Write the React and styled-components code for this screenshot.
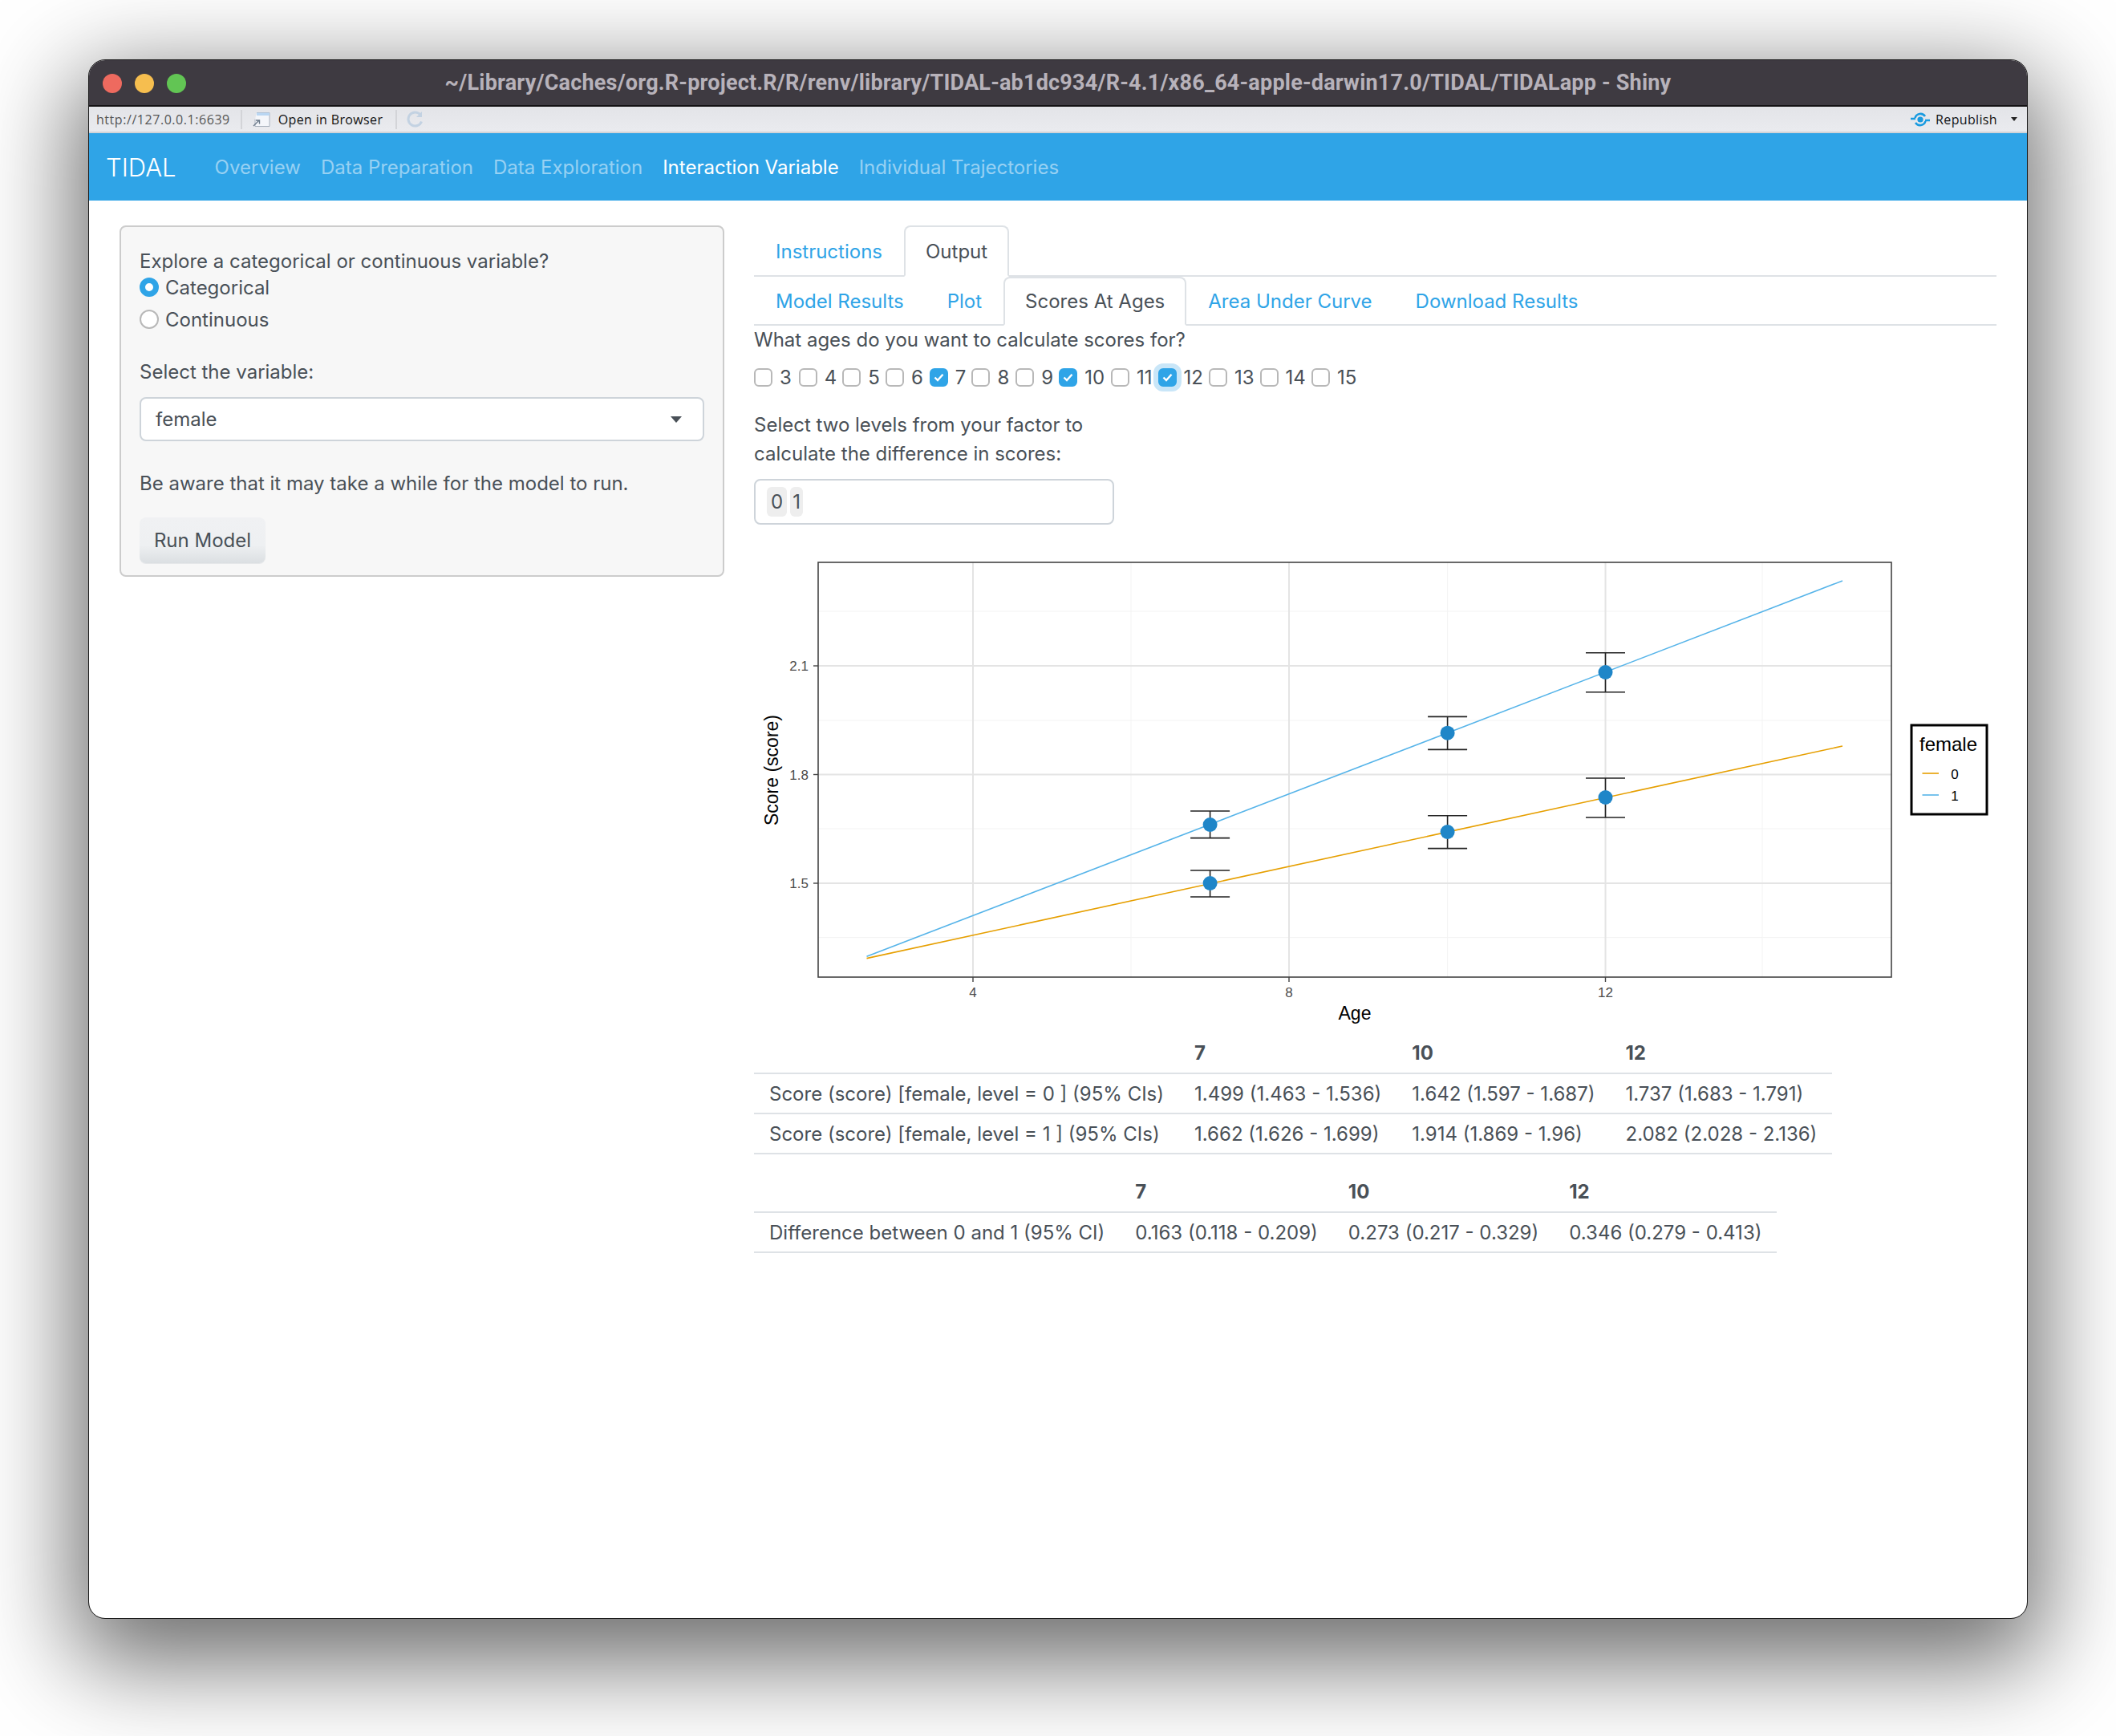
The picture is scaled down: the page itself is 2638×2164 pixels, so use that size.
import React from "react";
import styled, { createGlobalStyle } from "styled-components";

const Global = createGlobalStyle`
  html, body { margin: 0; padding: 0; background: #fff; }
  body { font-family: Inter, "Noto Sans", "Liberation Sans", sans-serif; color: #495057; }
  * { box-sizing: border-box; }
`;

const Page = styled.div`
  width: 2638px;
  height: 2164px;
  padding: 75px 0 0 111px;
  overflow: hidden;
`;
const Win = styled.div`
  width: 2416px;
  height: 1942px;
  border-radius: 20px;
  background: #fff;
  outline: 1px solid #1a1a1a;
  box-shadow: 0 38px 120px 18px rgba(0, 0, 0, 0.58);
  display: flex;
  flex-direction: column;
  overflow: hidden;
`;
const TitleBar = styled.div`
  height: 58px;
  flex: none;
  background: #3e3a41;
  border-bottom: 2px solid #141214;
  position: relative;
  display: flex;
  align-items: center;
  justify-content: center;
`;
const Lights = styled.div`
  position: absolute;
  left: 17px;
  top: 17px;
  display: flex;
  gap: 16px;
`;
const Light = styled.span`
  width: 24px;
  height: 24px;
  border-radius: 50%;
  background: ${(p) => p.$c};
`;
const TitleText = styled.div`
  font-family: Roboto, "Liberation Sans", sans-serif;
  font-weight: 700;
  font-size: 27px;
  color: #b7b2ba;
  letter-spacing: 0.2px;
  white-space: nowrap;
`;
const ToolBar = styled.div`
  height: 33px;
  flex: none;
  background: linear-gradient(#e3e4e8, #eaebef);
  border-bottom: 2px solid #d2d4d8;
  display: flex;
  align-items: center;
  padding: 0 12px 0 9px;
  font-family: "Open Sans", "DejaVu Sans", sans-serif;
  font-size: 16px;
  color: #111;
`;
const UrlText = styled.span`
  color: #555;
  font-size: 16px;
  letter-spacing: 0.55px;
  white-space: nowrap;
`;
const ToolSep = styled.span`
  width: 2px;
  height: 24px;
  background: #d3d4d8;
  margin: 0 ${(p) => p.$r}px 0 ${(p) => p.$l}px;
`;
const ToolLabel = styled.span`
  white-space: nowrap;
  letter-spacing: 0.35px;
`;
const Spacer = styled.div`
  flex: 1;
`;
const Caret = styled.span`
  width: 0;
  height: 0;
  border-left: 4px solid transparent;
  border-right: 4px solid transparent;
  border-top: 5px solid #222;
`;
const NavBar = styled.nav`
  height: 84px;
  flex: none;
  background: #2fa4e7;
  display: flex;
  align-items: center;
  padding: 0 0 0 21px;
`;
const Brand = styled.div`
  font-size: 31px;
  font-weight: 300;
  color: #fff;
  margin-right: 48px;
`;
const NavLink = styled.div`
  font-size: 24px;
  font-weight: 400;
  color: ${(p) => (p.$on ? "#fff" : "rgba(255,255,255,.5)")};
  margin-right: 25px;
  white-space: nowrap;
`;
const Main = styled.div`
  flex: 1;
  display: flex;
  gap: 37px;
  padding: 31px 38px 0 38px;
  align-items: flex-start;
`;
const Well = styled.aside`
  width: 754px;
  height: 438px;
  flex: none;
  background: #f7f7f7;
  border: 2px solid #ccc;
  border-radius: 8px;
  padding: 25px 23px 0 23px;
  font-size: 24px;
`;
const Line = styled.div`
  line-height: 36px;
  white-space: nowrap;
`;
const RadioRow = styled.div`
  display: flex;
  align-items: center;
  gap: 8px;
  height: ${(p) => p.$h}px;
  white-space: nowrap;
`;
const Radio = styled.span`
  width: 24px;
  height: 24px;
  border-radius: 50%;
  background: #fff;
  border: ${(p) => (p.$on ? "7px solid #2fa4e7" : "2px solid #b8b8b8")};
`;
const FieldLabel = styled(Line)`
  margin-top: ${(p) => p.$t}px;
`;
const SelectBox = styled.div`
  height: 55px;
  margin-top: 13px;
  background: #fff;
  border: 2px solid #ced4da;
  border-radius: 8px;
  display: flex;
  align-items: center;
  justify-content: space-between;
  padding: 0 26px 0 18px;
`;
const SelectCaret = styled.span`
  width: 0;
  height: 0;
  border-left: 7px solid transparent;
  border-right: 7px solid transparent;
  border-top: 8px solid #495057;
`;
const RunButton = styled.div`
  width: 157px;
  height: 57px;
  margin-top: 24px;
  border-radius: 8px;
  background: linear-gradient(#f0f1f3 0%, #eef0f2 60%, #dbdfe2 100%);
  box-shadow: 0 1px 0 #e6e8ea;
  display: flex;
  align-items: center;
  justify-content: center;
`;
const Content = styled.div`
  flex: 1;
  min-width: 0;
  font-size: 24px;
`;
const Tabs = styled.div`
  height: ${(p) => p.$h}px;
  display: flex;
  align-items: stretch;
  border-bottom: 2px solid #dee2e6;
`;
const Tab = styled.div`
  padding: 0 ${(p) => p.$px || 25}px;
  margin-bottom: -2px;
  display: flex;
  align-items: center;
  white-space: nowrap;
  color: ${(p) => (p.$on ? "#495057" : "#2fa4e7")};
  background: ${(p) => (p.$on ? "#fff" : "transparent")};
  border: 2px solid ${(p) => (p.$on ? "#dee2e6" : "transparent")};
  border-bottom-color: ${(p) => (p.$on ? "#fff" : "transparent")};
  border-radius: 8px 8px 0 0;
`;
const Checks = styled.div`
  display: flex;
  align-items: center;
  height: 36px;
  margin-top: 10px;
`;
const CheckItem = styled.div`
  display: flex;
  align-items: center;
  gap: 9px;
  margin-right: ${(p) => p.$mr}px;
`;
const Box = styled.span`
  width: 23px;
  height: 23px;
  border-radius: 6px;
  flex: none;
  display: flex;
  align-items: center;
  justify-content: center;
  background: ${(p) => (p.$on ? "#2fa4e7" : "#fff")};
  border: 2px solid ${(p) => (p.$on ? "#2fa4e7" : "#b8b8b8")};
  box-shadow: ${(p) => (p.$focus ? "0 0 0 6px #c9e6f8" : "none")};
`;
const Levels = styled.div`
  margin-top: 24px;
`;
const Selectize = styled.div`
  width: 449px;
  height: 57px;
  margin-top: 13px;
  border: 2px solid #ced4da;
  border-radius: 8px;
  display: flex;
  align-items: center;
  gap: 4px;
  padding: 0 0 0 14px;
`;
const Chip = styled.span`
  height: 37px;
  padding: 0 ${(p) => p.$px}px;
  border-radius: 6px;
  background: #eeeeee;
  display: flex;
  align-items: center;
`;
const PlotSvg = styled.svg`
  display: block;
  width: 1548px;
  height: 590px;
  margin-top: 37px;
`;
const Table = styled.table`
  border-collapse: collapse;
  margin-top: ${(p) => p.$t}px;
  font-size: 24px;
  & th {
    height: 50px;
    text-align: left;
    font-weight: 700;
    padding: 0 19px;
    white-space: nowrap;
    border-bottom: 2px solid #dee2e6;
  }
  & td {
    height: 50px;
    padding: 0 19px;
    white-space: nowrap;
    border-bottom: 2px solid #dee2e6;
  }
`;

const Check = () => (
  <svg width="13" height="11" viewBox="0 0 13 11">
    <path d="M1.5 5.5 L5 9 L11.5 1.8" fill="none" stroke="#fff" strokeWidth="2.4" />
  </svg>
);

const ages = [
  ["3", 0, 0, 9], ["4", 0, 0, 7], ["5", 0, 0, 7], ["6", 0, 0, 8], ["7", 1, 0, 7],
  ["8", 0, 0, 8], ["9", 0, 0, 7], ["10", 1, 0, 8], ["11", 0, 0, 7], ["12", 1, 1, 7],
  ["13", 0, 0, 7], ["14", 0, 0, 7], ["15", 0, 0, 0],
];

const xMajor = [1213, 1607, 2001.5];
const xMinor = [1410, 1804.6, 2197];
const yMajor = [[829, "2.1"], [964.5, "1.8"], [1100, "1.5"]];
const yMinor = [761, 897, 1032, 1167.6];
const points = [
  [1508.6, 1027, 1010, 1043.6], [1508.6, 1100, 1084, 1117],
  [1804.6, 912.7, 892.4, 933.4], [1804.6, 1036, 1015.7, 1056.6],
  [2001.5, 837, 812.8, 861.8], [2001.5, 993, 969, 1018],
];

const PlotText = styled.text`
  font-family: "Liberation Sans", Arial, sans-serif;
  font-size: ${(p) => p.$s}px;
  fill: ${(p) => p.$c};
`;

const Plot = () => (
  <PlotSvg viewBox="940 690 1548 590">
    {yMinor.map((y) => <line key={y} x1="1020" x2="2358" y1={y} y2={y} stroke="#f3f3f3" strokeWidth="1" />)}
    {xMinor.map((x) => <line key={x} x1={x} x2={x} y1="700" y2="1217" stroke="#f3f3f3" strokeWidth="1" />)}
    {yMajor.map(([y]) => <line key={y} x1="1020" x2="2358" y1={y} y2={y} stroke="#e4e4e4" strokeWidth="2" />)}
    {xMajor.map((x) => <line key={x} x1={x} x2={x} y1="700" y2="1217" stroke="#e4e4e4" strokeWidth="2" />)}
    <line x1="1080.5" y1="1191.3" x2="2297" y2="723" stroke="#56B4E9" strokeWidth="1.6" />
    <line x1="1080.5" y1="1193.6" x2="2297" y2="929" stroke="#E69F00" strokeWidth="1.6" />
    {points.map(([x, y, t, b]) => (
      <g key={x + "-" + y}>
        <path d={`M${x - 24.5} ${t}H${x + 24.5}M${x - 24.5} ${b}H${x + 24.5}M${x} ${t}V${b}`} stroke="#222" strokeWidth="1.6" fill="none" />
        <circle cx={x} cy={y} r="9" fill="#1f86c8" />
      </g>
    ))}
    <rect x="1020" y="700" width="1338" height="517" fill="none" stroke="#444" strokeWidth="1.6" />
    {yMajor.map(([y, t]) => (
      <g key={t}>
        <line x1="1014" x2="1020" y1={y} y2={y} stroke="#444" strokeWidth="1.4" />
        <PlotText x="1008" y={y + 6} textAnchor="end" $s={17} $c="#4d4d4d">{t}</PlotText>
      </g>
    ))}
    {xMajor.map((x, i) => (
      <g key={x}>
        <line x1={x} x2={x} y1="1217" y2="1223" stroke="#444" strokeWidth="1.4" />
        <PlotText x={x} y="1242" textAnchor="middle" $s={17} $c="#4d4d4d">{[4, 8, 12][i]}</PlotText>
      </g>
    ))}
    <PlotText x="1689" y="1270" textAnchor="middle" $s={23} $c="#000">Age</PlotText>
    <PlotText transform="translate(970 959) rotate(-90)" textAnchor="middle" $s={23} $c="#000">Score (score)</PlotText>
    <rect x="2383" y="903" width="94" height="111" fill="#fff" stroke="#000" strokeWidth="3" />
    <PlotText x="2393" y="935" $s={24} $c="#000">female</PlotText>
    <line x1="2396.5" x2="2417" y1="963" y2="963" stroke="#E69F00" strokeWidth="1.6" />
    <line x1="2396.5" x2="2417" y1="990" y2="990" stroke="#56B4E9" strokeWidth="1.6" />
    <PlotText x="2437" y="970" textAnchor="middle" $s={17} $c="#000">0</PlotText>
    <PlotText x="2437" y="997" textAnchor="middle" $s={17} $c="#000">1</PlotText>
  </PlotSvg>
);

export default function App() {
  return (
    <Page>
      <Global />
      <Win>
        <TitleBar>
          <Lights>
            <Light $c="#ee6a5f" />
            <Light $c="#f6be4f" />
            <Light $c="#62c554" />
          </Lights>
          <TitleText>~/Library/Caches/org.R-project.R/R/renv/library/TIDAL-ab1dc934/R-4.1/x86_64-apple-darwin17.0/TIDAL/TIDALapp - Shiny</TitleText>
        </TitleBar>
        <ToolBar>
          <UrlText>http://127.0.0.1:6639</UrlText>
          <ToolSep $l={13} $r={12} />
          <svg width="24" height="24" viewBox="0 0 24 24" style={{ marginRight: 9 }}>
            <path d="M6 3.5h16v17H4v-9" fill="#f4f6fa" stroke="#a8b0bc" strokeWidth="1" />
            <rect x="6" y="3.5" width="16" height="3.5" fill="#b9d6f2" />
            <path d="M2 20l7-7M5 13h4.5v4.5" fill="none" stroke="#6c7a8a" strokeWidth="1.4" />
          </svg>
          <ToolLabel>Open in Browser</ToolLabel>
          <ToolSep $l={16} $r={11} />
          <svg width="24" height="24" viewBox="0 0 24 24">
            <path d="M19.5 14.5a8.5 8.5 0 1 1-1.5-8.5" fill="none" stroke="#c3d2e2" strokeWidth="3" />
            <path d="M20 2v7h-7z" fill="#c3d2e2" />
          </svg>
          <Spacer />
          <svg width="24" height="24" viewBox="0 0 24 24" style={{ marginRight: 7 }}>
            <circle cx="12" cy="12" r="3.6" fill="#1a9be0" />
            <path d="M5.5 10A7 7 0 0 1 18 8M18.5 14A7 7 0 0 1 6 16" fill="none" stroke="#1a9be0" strokeWidth="2.6" />
            <path d="M0 11h6M18 13h6" stroke="#1a9be0" strokeWidth="2.6" />
          </svg>
          <ToolLabel>Republish</ToolLabel>
          <span style={{ width: 17 }} />
          <Caret />
        </ToolBar>
        <NavBar>
          <Brand>TIDAL</Brand>
          <NavLink>Overview</NavLink>
          <NavLink>Data Preparation</NavLink>
          <NavLink>Data Exploration</NavLink>
          <NavLink $on>Interaction Variable</NavLink>
          <NavLink>Individual Trajectories</NavLink>
        </NavBar>
        <Main>
          <Well>
            <Line>Explore a categorical or continuous variable?</Line>
            <RadioRow $h={28}><Radio $on />Categorical</RadioRow>
            <RadioRow $h={52}><Radio />Continuous</RadioRow>
            <FieldLabel $t={22}>Select the variable:</FieldLabel>
            <SelectBox>female<SelectCaret /></SelectBox>
            <FieldLabel $t={35}>Be aware that it may take a while for the model to run.</FieldLabel>
            <RunButton>Run Model</RunButton>
          </Well>
          <Content>
            <Tabs $h={64}>
              <Tab>Instructions</Tab>
              <Tab $on>Output</Tab>
            </Tabs>
            <Tabs $h={61}>
              <Tab>Model Results</Tab>
              <Tab>Plot</Tab>
              <Tab $on>Scores At Ages</Tab>
              <Tab>Area Under Curve</Tab>
              <Tab>Download Results</Tab>
            </Tabs>
            <Line>What ages do you want to calculate scores for?</Line>
            <Checks>
              {ages.map(([t, on, focus, mr]) => (
                <CheckItem key={t} $mr={mr}>
                  <Box $on={!!on} $focus={!!focus}>{on ? <Check /> : null}</Box>
                  {t}
                </CheckItem>
              ))}
            </Checks>
            <Levels>
              <Line>Select two levels from your factor to</Line>
              <Line>calculate the difference in scores:</Line>
            </Levels>
            <Selectize>
              <Chip $px={5}>0</Chip>
              <Chip $px={3}>1</Chip>
            </Selectize>
            <PlotWrap />
            <Table $t={7}>
              <thead>
                <tr><th></th><th>7</th><th>10</th><th>12</th></tr>
              </thead>
              <tbody>
                <tr>
                  <td>Score (score) [female, level = 0 ] (95% CIs)</td>
                  <td>1.499 (1.463 - 1.536)</td>
                  <td>1.642 (1.597 - 1.687)</td>
                  <td>1.737 (1.683 - 1.791)</td>
                </tr>
                <tr>
                  <td>Score (score) [female, level = 1 ] (95% CIs)</td>
                  <td>1.662 (1.626 - 1.699)</td>
                  <td>1.914 (1.869 - 1.96)</td>
                  <td>2.082 (2.028 - 2.136)</td>
                </tr>
              </tbody>
            </Table>
            <Table $t={22}>
              <thead>
                <tr><th></th><th>7</th><th>10</th><th>12</th></tr>
              </thead>
              <tbody>
                <tr>
                  <td>Difference between 0 and 1 (95% CI)</td>
                  <td>0.163 (0.118 - 0.209)</td>
                  <td>0.273 (0.217 - 0.329)</td>
                  <td>0.346 (0.279 - 0.413)</td>
                </tr>
              </tbody>
            </Table>
          </Content>
        </Main>
      </Win>
    </Page>
  );
}
const PlotWrap = Plot;
